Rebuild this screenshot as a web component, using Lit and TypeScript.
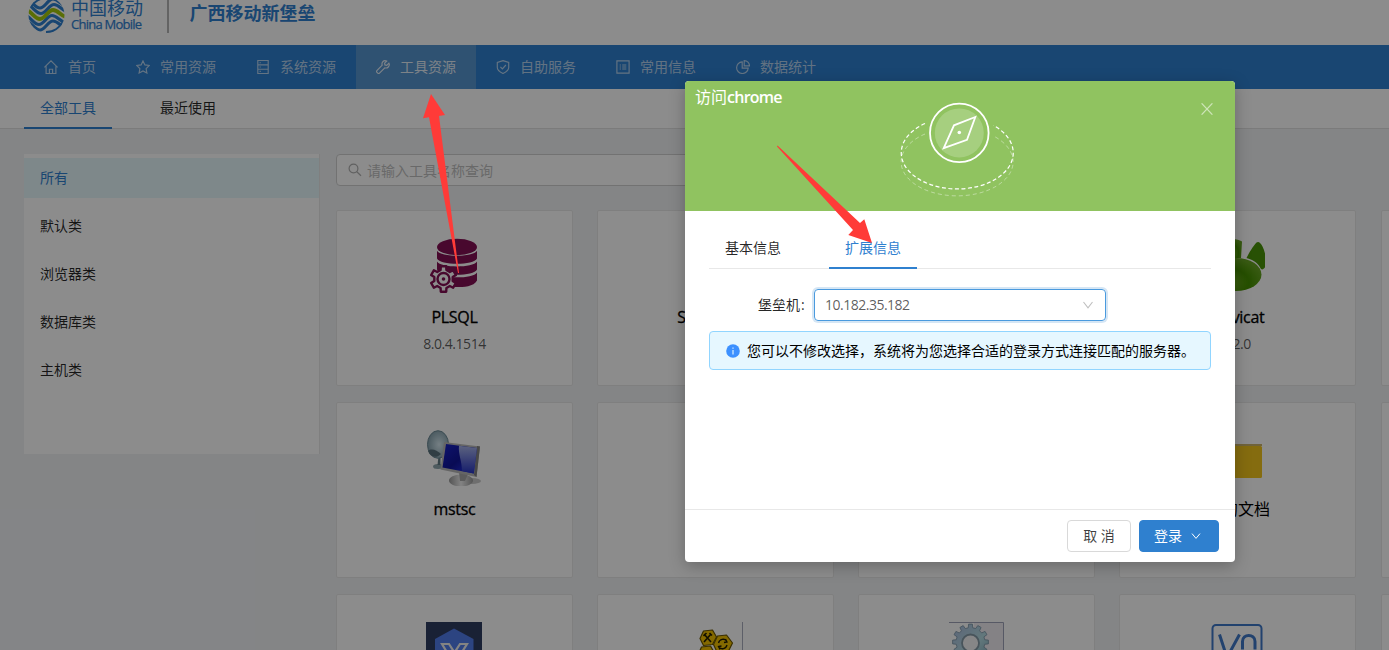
import { LitElement, html, svg, css, nothing, TemplateResult } from "lit";
import { customElement, property } from "lit/decorators.js";
import { classMap } from "lit/directives/class-map.js";

interface Tool {
  name: string;
  version?: string;
  icon?: string;
}

const NAV: { label: string; icon: string }[] = [
  { label: "首页", icon: "home" },
  { label: "常用资源", icon: "star" },
  { label: "系统资源", icon: "server" },
  { label: "工具资源", icon: "tool" },
  { label: "自助服务", icon: "shield" },
  { label: "常用信息", icon: "list" },
  { label: "数据统计", icon: "pie" },
];

const NAV_ICONS: Record<string, TemplateResult> = {
  home: svg`<path d="M.4 7.3 7 .8l6.6 6.5M2.1 6.2v7.3h9.8V6.2M5.4 13.5V9.2h3.2v4.3"/>`,
  star: svg`<path d="M7 .9 8.9 4.9l4.4.6-3.2 3.1.8 4.4L7 10.9 3.1 13l.8-4.4L.7 5.5l4.4-.6z"/>`,
  server: svg`<path d="M1.8.5h10.4v13H1.8zM1.8 4.8h10.4M1.8 9.2h10.4M3.6 2.7h1.2M3.6 7h1.2M3.6 11.4h1.2"/>`,
  tool: svg`<path d="M12.9 3.2 10.8 5.3 8.9 4.9 8.6 3.2 10.7 1.1C8.9.4 7 1 6.3 2.6c-.4.9-.4 1.8-.1 2.600L.9 10.6a1.2 1.2 0 0 0 0 1.7l.9.9a1.2 1.2 0 0 0 1.7 0L8.8 7.8c1.2.4 2.6.1 3.5-.8 1-1 1.2-2.6.6-3.800z"/>`,
  shield: svg`<path d="M7 .6 12.7 2.4v5.1C12.7 10.3 9.5 12.3 7 13.5 4.5 12.3 1.3 10.3 1.3 7.5V2.4zM4.4 6.9l2 2 3.5-3.900"/>`,
  list: svg`<path d="M.9.9h12.2v12.2H.9zM3.700 5h1.2M3.700 7h1.2M3.700 9h1.2M6.200 5h4.100M6.200 7h4.100M6.200 9h4.100"/>`,
  pie: svg`<path d="M6.2 1.900a5.800 5.800 0 1 0 6 6.200H6.200zM8.200.6v5.300h5.300A5.300 5.300 0 0 0 8.200.6z"/>`,
};

const TOOLS: Tool[] = [
  { name: "PLSQL", version: "8.0.4.1514", icon: "plsql" },
  { name: "SecureCRT" },
  { name: "chrome" },
  { name: "Navicat", version: "12.0", icon: "navicat" },
  { name: "" },
  { name: "mstsc", icon: "mstsc" },
  { name: "" },
  { name: "" },
  { name: "我的文档", icon: "folder" },
  { name: "" },
  { name: "", icon: "hex" },
  { name: "", icon: "comb" },
  { name: "", icon: "gear" },
  { name: "", icon: "vnc" },
  { name: "" },
];

function gearPath(cx: number, cy: number, r: number, depth: number, teeth: number): string {
  const pts: string[] = [];
  const step = (Math.PI * 2) / teeth;
  const shape: [number, number][] = [
    [-0.3, r - depth],
    [-0.2, r],
    [0.2, r],
    [0.3, r - depth],
  ];
  for (let i = 0; i < teeth; i++) {
    for (const [o, rad] of shape) {
      const a = -Math.PI / 2 + (i + o) * step;
      pts.push(`${(cx + rad * Math.cos(a)).toFixed(2)} ${(cy + rad * Math.sin(a)).toFixed(2)}`);
    }
  }
  return `M${pts.join("L")}Z`;
}

const TOOL_ICONS: Record<string, TemplateResult> = {
  plsql: svg`
    <g fill="#841054">
      <ellipse cx="31" cy="9" rx="20" ry="8.200"/>
      <path d="M11 12.800c4 6.600 36 6.600 40 0V20.600c-3 7-37 7-40 0z"/>
      <path d="M11 23.600c4 6.600 36 6.600 40 0V31.400c-3 7-37 7-40 0z"/>
      <path d="M11 34.400c4 6.600 36 6.600 40 0v8c-3 6.200-14 6.600-20 6.600H20z"/>
    </g>
    <path d=${gearPath(17.5, 41, 13, 3.6, 6)} fill="#fff" stroke="#841054" stroke-width="2.400" stroke-linejoin="round"/>
    <circle cx="17.500" cy="41" r="6" fill="none" stroke="#841054" stroke-width="2.400"/>
    <circle cx="17.500" cy="41" r="1.800" fill="#841054"/>`,
  mstsc: svg`
    <defs>
      <linearGradient id="scr" x1="0" y1="0" x2="1" y2="1"><stop offset="0" stop-color="#1a25c8"/><stop offset=".5" stop-color="#10149a"/><stop offset="1" stop-color="#2b3cff"/></linearGradient>
      <linearGradient id="shine" x1="0" y1="0" x2="0" y2="1"><stop offset="0" stop-color="#a8b4e8"/><stop offset="1" stop-color="#2734c4"/></linearGradient>
      <radialGradient id="dish" cx=".55" cy=".5" r=".6"><stop offset="0" stop-color="#d5e8f0"/><stop offset="1" stop-color="#7e9aa6"/></radialGradient>
      <linearGradient id="foot" x1="0" x2="1"><stop offset="0" stop-color="#9a9a9a"/><stop offset=".5" stop-color="#efefef"/><stop offset="1" stop-color="#9a9a9a"/></linearGradient>
    </defs>
    <ellipse cx="46" cy="51" rx="9" ry="3" fill="#c9c9c9"/>
    <ellipse cx="12" cy="36.500" rx="5" ry="2.500" fill="#8fa6ad"/>
    <path d="M12.500 26h2v9h-3z" fill="#627a84"/>
    <ellipse cx="12" cy="14.500" rx="10.500" ry="13.800" fill="url(#dish)" stroke="#6d8a96" stroke-width="1"/>
    <path d="M2 21c3-3 9-1 13 3-5 5-11 3-13-3z" fill="#5a727d"/>
    <ellipse cx="35" cy="50.500" rx="12" ry="6" fill="url(#foot)"/>
    <path d="M33 42h10l-4 9h-5z" fill="#a8a8a8"/>
    <path d="M18 12 54 16.500 50.500 47 14.500 39.500z" fill="#b9b9b9"/>
    <path d="M51 16 54 16.500 50.500 47 48 45z" fill="#828282"/>
    <path d="M20 14 51 18 47.800 43.500 16.500 37.500z" fill="url(#scr)"/>
    <path d="M33 15.700 51 18 47.800 43.500 36 41C36 31 32 24 33 15.700z" fill="url(#shine)"/>`,
  navicat: svg`
    <defs><radialGradient id="nav" cx=".3" cy=".75" r=".75"><stop offset="0" stop-color="#78b428"/><stop offset=".6" stop-color="#449000"/><stop offset="1" stop-color="#66a421"/></radialGradient></defs>
    <path d="M19 2c4-2 10-1 14 1.500L32 20H19z" fill="url(#nav)"/>
    <path d="M37.500 20C41 13 45 7 47.500 4.500c2-1.500 4 0 6 4 3 6 4.500 15 3 20-1.500 2.500-3 3.500-4.500 2.500-2.500-5-6-8.500-14.500-11z" fill="#4a9408"/>
    <ellipse cx="27" cy="36.500" rx="25.500" ry="16.500" fill="url(#nav)"/>`,
  folder: svg`
    <path d="M0 14h53v2H0z" fill="#cdb46a"/>
    <rect x="0" y="16" width="53" height="32" rx="1.500" fill="#f2c51c"/>`,
  hex: svg`
    <rect width="56" height="56" fill="#2f3c62"/>
    <path d="M28 6.500 47.500 17v24L28 51.500 9 41V17z" fill="#507cec"/>
    <path d="M16 22h7l5.500 8.500L34 22h7L32 36.500V46h-7l4-8-4-1z" fill="none" stroke="#eee" stroke-width="2.200"/>`,
  comb: svg`
    <path d="M55.500 0v56" stroke="#a9adbd" stroke-width="1"/>
    <g transform="translate(3.500 0)">
      <g fill="#f0c000" stroke="#6b5600" stroke-width="1.200" stroke-linejoin="round">
        <path d="m13 9 9-1 4 7-4 7.500-9 1-3.500-7z"/>
        <path d="m27 14 9-1 6 8-4.500 9-10.500 1-4-8.500z"/>
        <path d="m11 25 9-1 4 7-4 8-9 1-3-8z"/>
      </g>
      <path d="m13.500 12 7 8m0-8-7 8m-.5-6 3-3m3 0 2.500 2.500" stroke="#221c00" stroke-width="1.600" fill="none"/>
      <path d="M28 21c1-4 6-5 8-2m.5 4c-1 4-6 5-8 2m6.500-8 1.500 3-3 .5m-4 7-1.500-3 3-.5" stroke="#221c00" stroke-width="1.300" fill="none"/>
    </g>`,
  gear: svg`
    <defs><linearGradient id="gr" x1="0" y1="0" x2="1" y2="1"><stop offset="0" stop-color="#a8b8dc"/><stop offset=".6" stop-color="#b4dbe2"/><stop offset="1" stop-color="#7fa8b8"/></linearGradient></defs>
    <path d="M26 1h29v55H26z" fill="#f1edf3"/>
    <path d="M1 .5h54.500V56" fill="none" stroke="#9fa3b8" stroke-width="1"/>
    <path d=${gearPath(22.5, 20, 18, 3.6, 12)} fill="url(#gr)" stroke="#7893a6" stroke-width=".8" stroke-linejoin="round"/>
    <circle cx="22.500" cy="21" r="8.500" fill="#f4f4f6" stroke="#8499a6" stroke-width="1.800"/>`,
  vnc: svg`
    <rect x="3.500" y="3" width="49" height="50" rx="3.500" fill="none" stroke="#3e78c9" stroke-width="2"/>
    <path d="M10.500 12.500l7.500 23L30.500 12.500M33.500 27.500V19.500c0-8 12.500-8 12.500 0v8" fill="none" stroke="#3e78c9" stroke-width="3"/>`,
};

@customElement("tool-card")
class ToolCard extends LitElement {
  @property({ attribute: false }) tool: Tool = { name: "" };

  static styles = css`
    :host {
      display: flex;
      flex-direction: column;
      align-items: center;
      box-sizing: border-box;
      height: 176px;
      padding-top: 27px;
      background: #fff;
      border: 1px solid #e8e8e8;
      border-radius: 2px;
    }
    .icon {
      width: 56px;
      height: 56px;
      display: block;
      overflow: hidden;
      margin-right: 1px;
    }
    .name {
      margin-top: 11px;
      height: 24px;
      line-height: 24px;
      font-size: 16px;
      letter-spacing: -0.3px;
      -webkit-text-stroke: 0.3px #000;
      color: #000;
      white-space: nowrap;
    }
    .name.cjk {
      letter-spacing: 0;
      -webkit-text-stroke: 0;
    }
    .version {
      margin-top: 4px;
      line-height: 22px;
      font-size: 14px;
      letter-spacing: -0.45px;
      color: rgba(0, 0, 0, 0.65);
    }
  `;

  render() {
    const t = this.tool;
    const cjk = /[\u4e00-\u9fff]/.test(t.name);
    return html`
      <svg class="icon" viewBox="0 0 56 56">${t.icon ? TOOL_ICONS[t.icon] : nothing}</svg>
      <div class=${classMap({ name: true, cjk })}>${t.name}</div>
      ${t.version ? html`<div class="version">${t.version}</div>` : nothing}
    `;
  }
}

@customElement("access-dialog")
class AccessDialog extends LitElement {
  static styles = css`
    :host {
      display: flex;
      flex-direction: column;
      width: 550px;
      height: 481px;
      border-radius: 4px;
      overflow: hidden;
      background: #fff;
      box-shadow: 0 4px 16px rgba(0, 0, 0, 0.25);
      color: rgba(0, 0, 0, 0.85);
    }
    .banner {
      position: relative;
      height: 130px;
      flex: none;
      background: #90c360;
      color: #fff;
    }
    .title {
      padding: 4px 10px;
      font-size: 16px;
      line-height: 24px;
    }
    .latin {
      font-weight: 600;
      letter-spacing: -0.75px;
    }
    .art {
      position: absolute;
      left: 205px;
      top: 15px;
    }
    .close {
      position: absolute;
      right: 22px;
      top: 22px;
    }
    .body {
      flex: 1;
      padding: 16px 24px 0;
    }
    .tabs {
      display: flex;
      gap: 32px;
      height: 41px;
      border-bottom: 1px solid #e8e8e8;
    }
    .tab {
      box-sizing: border-box;
      height: 42px;
      padding: 0 16px;
      line-height: 41px;
    }
    .tab.on {
      color: #2f80cf;
      border-bottom: 2px solid #2f80cf;
    }
    .field {
      display: flex;
      align-items: center;
      margin: 20px 0 10px 49px;
    }
    .label {
      width: 56px;
      white-space: nowrap;
    }
    .colon {
      margin-left: 1px;
    }
    .select {
      box-sizing: border-box;
      display: flex;
      align-items: center;
      justify-content: space-between;
      width: 292px;
      height: 32px;
      padding: 0 11px 0 10px;
      border: 1px solid #4a9ade;
      border-radius: 4px;
      box-shadow: 0 0 0 2px rgba(47, 128, 207, 0.2);
      color: rgba(0, 0, 0, 0.65);
    }
    .value {
      letter-spacing: -0.5px;
    }
    .alert {
      box-sizing: border-box;
      display: flex;
      align-items: center;
      height: 39px;
      padding-left: 16px;
      gap: 7px;
      border: 1px solid #91d5ff;
      border-radius: 4px;
      background: #e6f7ff;
      color: #000;
      white-space: nowrap;
    }
    .footer {
      display: flex;
      justify-content: flex-end;
      gap: 8px;
      height: 42px;
      padding: 10px 16px 0;
      border-top: 1px solid #e8e8e8;
    }
    .btn {
      box-sizing: border-box;
      height: 32px;
      padding: 0 15px;
      border: 1px solid #d9d9d9;
      border-radius: 4px;
      background: #fff;
      font: inherit;
      line-height: 30px;
      color: rgba(0, 0, 0, 0.75);
      white-space: nowrap;
    }
    .cancel {
      width: 64px;
    }
    .primary {
      display: flex;
      align-items: center;
      gap: 9px;
      width: 80px;
      padding-left: 14px;
      background: #2f80cf;
      border-color: #2f80cf;
      color: #fff;
    }
  `;

  render() {
    return html`
      <div class="banner">
        <div class="title">访问<span class="latin">chrome</span></div>
        <svg class="art" width="130" height="110" viewBox="890 96 130 110" fill="none" stroke="#fff">
          <path d="M925 123.500A56 36 0 1 0 993.500 125.500" stroke-width="1.200" stroke-dasharray="4 2.500"/>
          <path d="M925 134A56 34 0 1 0 993.500 136" stroke-width="1" stroke-dasharray="4 3" opacity=".4"/>
          <circle cx="959.300" cy="132.900" r="24.500" fill="#fff" fill-opacity=".2" stroke="none"/>
          <circle cx="959.300" cy="132.900" r="29.300" stroke-width="1.800"/>
          <path d="M975.300 117 954 125.300 943.700 148.200 967 139.800z" stroke-width="1.800"/>
          <circle cx="959.300" cy="132.500" r="1.800" fill="#fff" stroke="none"/>
        </svg>
        <svg class="close" width="12" height="12" viewBox="0 0 12 12" stroke="#fff" stroke-opacity=".55" stroke-width="1.200">
          <path d="M.6.300 11.400 11.700M11.400.300.6 11.700"/>
        </svg>
      </div>
      <div class="body">
        <div class="tabs">
          <div class="tab">基本信息</div>
          <div class="tab on">扩展信息</div>
        </div>
        <div class="field">
          <div class="label">堡垒机<span class="colon">:</span></div>
          <div class="select">
            <span class="value">10.182.35.182</span>
            <svg width="12" height="12" viewBox="0 0 12 12" fill="none" stroke="#bfbfbf" stroke-width="1.100"><path d="M1.500 3 6 8.800 10.500 3"/></svg>
          </div>
        </div>
        <div class="alert">
          <svg width="14" height="14" viewBox="0 0 14 14">
            <circle cx="7" cy="7" r="6.800" fill="#3c90ff"/>
            <path d="M7 6v4.500M7 3.500v1.200" stroke="#e6f7ff" stroke-width="1.100"/>
          </svg>
          <span>您可以不修改选择，系统将为您选择合适的登录方式连接匹配的服务器。</span>
        </div>
      </div>
      <div class="footer">
        <button class="btn cancel">取 消</button>
        <button class="btn primary">
          登录
          <svg width="10" height="10" viewBox="0 0 10 10" fill="none" stroke="#fff" stroke-width="1"><path d="M1 2.600 5 7.400 9 2.600"/></svg>
        </button>
      </div>
    `;
  }
}

const WAVE = "M-2 9.500C4 12 7 19 12 19S20 10 25 10 32 15 38 17";

@customElement("app-root")
class AppRoot extends LitElement {
  static styles = css`
    :host {
      display: block;
      position: relative;
      width: 1389px;
      height: 650px;
      overflow: hidden;
      background: #f0f2f5;
      color: rgba(0, 0, 0, 0.85);
      font-family: "Open Sans", "Noto Sans CJK SC", sans-serif;
      font-size: 14px;
      line-height: 22px;
    }
    .header {
      display: flex;
      height: 45px;
      padding-left: 28px;
      background: #fff;
      color: #2f80cf;
    }
    .mark {
      flex: none;
    }
    .brand {
      width: 96px;
      margin-left: 6px;
      white-space: nowrap;
    }
    .brand-cn {
      font-size: 18px;
      line-height: 16px;
    }
    .brand-en {
      font-size: 13px;
      line-height: 16px;
      letter-spacing: -0.75px;
      -webkit-text-stroke: 0.25px #2f80cf;
    }
    .rule {
      width: 2px;
      height: 33px;
      background: #b5b5b5;
    }
    .product {
      margin: 0 0 0 20.5px;
      font-size: 18px;
      font-weight: 700;
      line-height: 26px;
    }
    .nav {
      display: flex;
      height: 44px;
      padding-left: 24px;
      background: #2f80cf;
      color: rgba(255, 255, 255, 0.65);
    }
    .nav-item {
      display: flex;
      align-items: center;
      gap: 10px;
      padding: 0 20px;
    }
    .nav-item.on {
      background: #5695d0;
      color: rgba(255, 255, 255, 0.85);
    }
    .nav-item svg {
      fill: none;
      stroke: currentColor;
      stroke-width: 1.15;
    }
    .subtabs {
      display: flex;
      gap: 32px;
      height: 39px;
      padding-left: 24px;
      background: #fff;
      border-bottom: 1px solid #e0e0e0;
    }
    .subtab {
      box-sizing: border-box;
      padding: 0 16px;
      line-height: 38px;
      height: 40px;
    }
    .subtab.on {
      color: #2f80cf;
      border-bottom: 2px solid #2f80cf;
    }
    .content {
      display: flex;
      align-items: flex-start;
      gap: 16px;
      padding: 25px 0 0 24px;
    }
    .side {
      box-sizing: border-box;
      flex: none;
      display: flex;
      flex-direction: column;
      gap: 8px;
      width: 296px;
      height: 300px;
      padding-top: 4px;
      background: #fff;
      border-right: 1px solid #e8e8e8;
    }
    .side-item {
      height: 40px;
      line-height: 40px;
      padding-left: 16px;
    }
    .side-item.on {
      background: #e6f7fb;
      color: #2f80cf;
    }
    .main {
      flex: none;
      width: 1282px;
    }
    .search {
      box-sizing: border-box;
      display: flex;
      align-items: center;
      gap: 5px;
      width: 600px;
      height: 32px;
      padding-left: 11px;
      border: 1px solid #d0d0d0;
      border-radius: 4px;
      background: #fff;
      color: #bfbfbf;
    }
    .search span {
      padding-top: 1px;
    }
    .grid {
      display: grid;
      grid-template-columns: repeat(5, 237px);
      column-gap: 24.15px;
      row-gap: 16px;
      margin-top: 24px;
    }
    .mask {
      position: absolute;
      inset: 0;
      background: rgba(0, 0, 0, 0.45);
    }
    access-dialog {
      position: absolute;
      left: 685px;
      top: 81px;
    }
    .arrows {
      position: absolute;
      inset: 0;
      fill: #ff3b38;
    }
  `;

  render() {
    return html`
      <div class="header">
        <svg class="mark" width="37" height="34" viewBox="0 0 37 34" fill="none">
          <defs><clipPath id="disc"><circle cx="18.500" cy="15" r="18"/></clipPath></defs>
          <g clip-path="url(#disc)">
            <g stroke="#2f80cf" stroke-width="3.200">
              <path d=${WAVE} transform="translate(1 -5.500)"/>
              <path d=${WAVE} transform="translate(0 -11)"/>
              <path d=${WAVE} transform="translate(-1 5.500)"/>
              <path d=${WAVE} transform="translate(0 11)"/>
              <path d="M2.500 7C6 1 10-2 18-3M34.500 23C31 29 27 32.200 18 32.500"/>
            </g>
            <path d=${WAVE} stroke="#a4c90c" stroke-width="3.800"/>
          </g>
        </svg>
        <div class="brand">
          <div class="brand-cn">中国移动</div>
          <div class="brand-en">China Mobile</div>
        </div>
        <div class="rule"></div>
        <div class="product">广西移动新堡垒</div>
      </div>
      <div class="nav">
        ${NAV.map(
          (n) => html`<div class=${classMap({ "nav-item": true, on: n.icon === "tool" })}>
            <svg width="14" height="14" viewBox="0 0 14 14">${NAV_ICONS[n.icon]}</svg>
            <span>${n.label}</span>
          </div>`
        )}
      </div>
      <div class="subtabs">
        <div class="subtab on">全部工具</div>
        <div class="subtab">最近使用</div>
      </div>
      <div class="content">
        <div class="side">
          ${["所有", "默认类", "浏览器类", "数据库类", "主机类"].map(
            (c, i) => html`<div class=${classMap({ "side-item": true, on: i === 0 })}>${c}</div>`
          )}
        </div>
        <div class="main">
          <div class="search">
            <svg width="14" height="14" viewBox="0 0 14 14" fill="none" stroke="#b0b0b0" stroke-width="1.200"><circle cx="5.500" cy="5.500" r="4.400"/><path d="m8.800 8.800 4.200 4"/></svg>
            <span>请输入工具名称查询</span>
          </div>
          <div class="grid">${TOOLS.map((t) => html`<tool-card .tool=${t}></tool-card>`)}</div>
        </div>
      </div>
      <div class="mask"></div>
      <access-dialog></access-dialog>
      <svg class="arrows" width="1389" height="650" viewBox="0 0 1389 650">
        <path d="M431 94 445 115 439 116 459 273H458L429 117.300 423 118.300z"/>
        <path d="M872 243 864.300 219.300 860 223 777.500 145.500 777 146.500 853 230 848.300 235z"/>
      </svg>
    `;
  }
}
